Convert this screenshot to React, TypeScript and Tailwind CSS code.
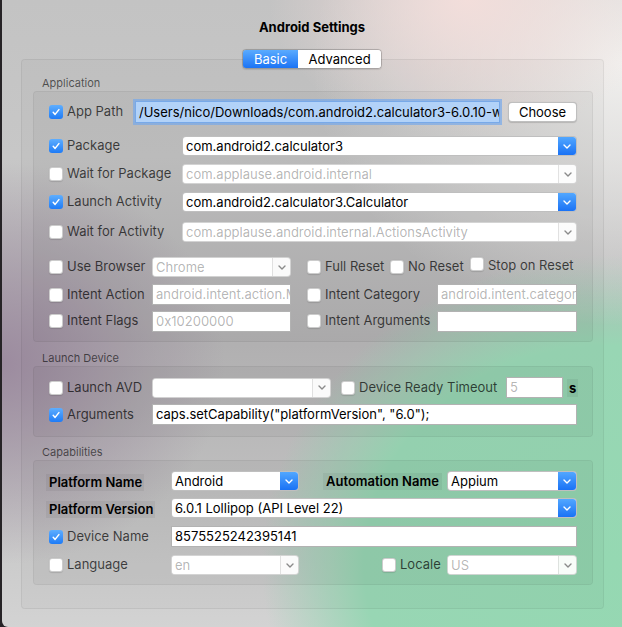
import React from "react"

// small chevron used by every popup button
function Chevron({ light }: { light?: boolean }) {
  return (
    <svg width="8" height="5" viewBox="0 0 8 5">
      <polyline
        points="1,1 4,4 7,1"
        fill="none"
        stroke={light ? "#ffffff" : "#8a8a8a"}
        strokeWidth="1.4"
        strokeLinecap="round"
        strokeLinejoin="round"
      />
    </svg>
  )
}

function Check({ on, className = "" }: { on?: boolean; className?: string }) {
  if (on) {
    return (
      <span
        className={`flex h-[14px] w-[14px] shrink-0 items-center justify-center rounded-[3px] bg-[linear-gradient(#5eaeff,#1e7bf6)] ${className}`}
      >
        <svg width="10" height="10" viewBox="0 0 10 10">
          <path
            d="M2.2 5.3 4.1 7.4 7.9 2.6"
            fill="none"
            stroke="#fff"
            strokeWidth="1.5"
            strokeLinecap="round"
            strokeLinejoin="round"
          />
        </svg>
      </span>
    )
  }
  return (
    <span
      className={`h-[14px] w-[14px] shrink-0 rounded-[3px] border border-black/20 bg-white shadow-[0_0.5px_1px_rgba(0,0,0,0.12)] ${className}`}
    />
  )
}

function Label({ children, w }: { children: React.ReactNode; w: string }) {
  return <span className={`ml-[4px] shrink-0 whitespace-nowrap text-[13px] text-black/70 ${w}`}>{children}</span>
}

function PopUp({ value, w }: { value: string; w: string }) {
  return (
    <div className={`flex h-[20px] shrink-0 overflow-hidden rounded-[4px] border border-black/25 bg-white ${w}`}>
      <div className="flex-1 overflow-hidden whitespace-nowrap pl-[3px] text-[13px] leading-[18px] text-black">{value}</div>
      <div className="flex w-[18px] items-center justify-center bg-[linear-gradient(#52a7ff,#1a72f5)]">
        <Chevron light />
      </div>
    </div>
  )
}

function OffPopUp({ value, w }: { value: string; w: string }) {
  return (
    <div className={`flex h-[20px] shrink-0 overflow-hidden rounded-[4px] border border-black/15 bg-white/90 ${w}`}>
      <div className="flex-1 overflow-hidden whitespace-nowrap bg-white pl-[3px] text-[13px] leading-[18px] text-black/30">
        {value}
      </div>
      <div className="flex w-[18px] items-center justify-center border-l border-black/10 bg-white/40">
        <Chevron />
      </div>
    </div>
  )
}

function Field({ value, w, dim }: { value: string; w: string; dim?: boolean }) {
  return (
    <div
      className={`h-[21px] shrink-0 overflow-hidden whitespace-nowrap border border-black/30 bg-white pl-[3px] text-[13px] leading-[19px] ${
        dim ? "text-black/30" : "text-black"
      } ${w}`}
    >
      {value}
    </div>
  )
}

function Heading({ children, top }: { children: React.ReactNode; top: string }) {
  return <div className={`ml-[20px] h-[16px] text-[11px] leading-[16px] text-black/60 ${top}`}>{children}</div>
}

function BoldLabel({ children, w }: { children: React.ReactNode; w: string }) {
  return (
    <span className={`h-[17px] shrink-0 whitespace-nowrap bg-black/[0.05] pl-[3px] text-[13px] font-semibold leading-[17px] text-black ${w}`}>
      {children}
    </span>
  )
}

export default function App() {
  return (
    <div className="flex h-[627px] w-[622px] overflow-hidden bg-[#262326] font-['Inter','Liberation_Sans',sans-serif]">
      <div className="ml-[2px] h-[627px] w-[620px] rounded-bl-[6px] bg-[image:radial-gradient(ellipse_32%_22%_at_75%_0%,rgba(244,222,219,0.95),rgba(244,222,219,0)),radial-gradient(ellipse_50%_42%_at_100%_10%,rgba(243,242,240,0.95),rgba(243,242,240,0)),radial-gradient(ellipse_66%_58%_at_98%_90%,#95d8b2_0%,#98d6b4_60%,rgba(152,214,180,0)_85%),radial-gradient(ellipse_36%_32%_at_0%_58%,#9c8b9f,rgba(156,139,159,0)),linear-gradient(to_bottom,#c3c3c3_0%,#c7c7c7_25%,#b6b5b6_55%,#c5c5c5_80%,#d3d3d3_100%)]">
        <div className="pt-[19px] text-center text-[13px] font-bold leading-[16px] text-black">Android Settings</div>

        <div className="relative z-10 mt-[14px] flex justify-center">
          <div className="flex h-[20px] overflow-hidden rounded-[4px] border border-black/20 text-[13px] leading-[18px] shadow-[0_0.5px_1px_rgba(0,0,0,0.1)]">
            <span className="w-[55px] bg-[linear-gradient(#5aabff,#1c74f5)] text-center text-white">Basic</span>
            <span className="w-[83px] bg-white text-center text-black">Advanced</span>
          </div>
        </div>

        <div className="ml-[19px] -mt-[10px] w-[583px] rounded-[4px] border border-black/[0.06] bg-black/[0.025] pb-[23px] pt-[15px]">
          <Heading top="">Application</Heading>
          <div className="ml-[11px] w-[560px] rounded-[4px] border border-black/[0.05] bg-black/[0.035] pb-[10px] pl-[15px] pt-[9px]">
            <div className="flex h-[22px] items-center">
              <Check on />
              <Label w="w-[68px]">App Path</Label>
              <div className="h-[22px] w-[365px] shrink-0 overflow-hidden whitespace-nowrap border border-[#78a9e8] bg-[#b2d2f8] pl-[3px] text-[13px] leading-[20px] text-black shadow-[0_0_0_2px_rgba(120,170,235,0.7)]">
                /Users/nico/Downloads/com.android2.calculator3-6.0.10-w
              </div>
              <div className="ml-[8px] h-[20px] w-[69px] rounded-[4px] border border-black/25 bg-white text-center text-[13px] leading-[18px] text-black shadow-[0_0.5px_1px_rgba(0,0,0,0.15)]">
                Choose
              </div>
            </div>

            <div className="mt-[13px] flex h-[20px] items-center">
              <Check on />
              <Label w="w-[115px]">Package</Label>
              <PopUp value="com.android2.calculator3" w="w-[395px]" />
            </div>
            <div className="mt-[8px] flex h-[20px] items-center">
              <Check />
              <Label w="w-[115px]">Wait for Package</Label>
              <OffPopUp value="com.applause.android.internal" w="w-[395px]" />
            </div>
            <div className="mt-[8px] flex h-[20px] items-center">
              <Check on />
              <Label w="w-[115px]">Launch Activity</Label>
              <PopUp value="com.android2.calculator3.Calculator" w="w-[395px]" />
            </div>
            <div className="mt-[10px] flex h-[20px] items-center">
              <Check />
              <Label w="w-[115px]">Wait for Activity</Label>
              <OffPopUp value="com.applause.android.internal.ActionsActivity" w="w-[395px]" />
            </div>

            <div className="mt-[15px] flex h-[20px] items-center">
              <Check />
              <Label w="w-[85px]">Use Browser</Label>
              <OffPopUp value="Chrome" w="w-[139px]" />
              <Check className="ml-[16px]" />
              <Label w="w-[65px]">Full Reset</Label>
              <Check />
              <Label w="w-[62px]">No Reset</Label>
              <Check className="-mt-[6px]" />
              <span className="-mt-[2px] ml-[4px] whitespace-nowrap text-[13px] text-black/70">Stop on Reset</span>
            </div>
            <div className="mt-[7px] flex h-[21px] items-center">
              <Check />
              <Label w="w-[85px]">Intent Action</Label>
              <Field value="android.intent.action.M" w="w-[139px]" dim />
              <Check className="ml-[16px]" />
              <Label w="w-[112px]">Intent Category</Label>
              <Field value="android.intent.categor" w="w-[140px]" dim />
            </div>
            <div className="mt-[6px] flex h-[20px] items-center">
              <Check />
              <Label w="w-[85px]">Intent Flags</Label>
              <Field value="0x10200000" w="w-[139px]" dim />
              <Check className="ml-[16px]" />
              <Label w="w-[112px]">Intent Arguments</Label>
              <Field value="" w="w-[140px]" />
            </div>
          </div>

          <Heading top="mt-[8px]">Launch Device</Heading>
          <div className="ml-[11px] w-[560px] rounded-[4px] border border-black/[0.05] bg-black/[0.035] pb-[11px] pl-[15px] pt-[10px]">
            <div className="flex h-[21px] items-center">
              <Check />
              <Label w="w-[85px]">Launch AVD</Label>
              <OffPopUp value="" w="w-[179px]" />
              <Check className="ml-[10px]" />
              <Label w="w-[147px]">Device Ready Timeout</Label>
              <Field value="5" w="w-[57px]" dim />
              <span className="ml-[4px] h-[18px] bg-black/[0.05] px-[2px] text-[13px] font-bold leading-[18px] text-black">s</span>
            </div>
            <div className="mt-[6px] flex h-[21px] items-center">
              <Check on />
              <Label w="w-[85px]">Arguments</Label>
              <Field value={'caps.setCapability("platformVersion", "6.0");'} w="w-[425px]" />
            </div>
          </div>

          <Heading top="mt-[7px]">Capabilities</Heading>
          <div className="ml-[11px] w-[560px] rounded-[4px] border border-black/[0.05] bg-black/[0.035] pb-[9px] pl-[12px] pt-[10px]">
            <div className="flex h-[20px] items-center">
              <span className="w-[125px] shrink-0">
                <BoldLabel w="inline-block w-[98px]">Platform Name</BoldLabel>
              </span>
              <PopUp value="Android" w="w-[128px]" />
              <BoldLabel w="ml-[24px] w-[119px]">Automation Name</BoldLabel>
              <span className="w-[5px] shrink-0" />
              <PopUp value="Appium" w="w-[130px]" />
            </div>
            <div className="mt-[7px] flex h-[20px] items-center">
              <span className="w-[125px] shrink-0">
                <BoldLabel w="inline-block w-[109px]">Platform Version</BoldLabel>
              </span>
              <PopUp value="6.0.1 Lollipop (API Level 22)" w="w-[406px]" />
            </div>
            <div className="mt-[8px] flex h-[21px] items-center pl-[3px]">
              <Check on />
              <Label w="w-[104px]">Device Name</Label>
              <Field value="8575525242395141" w="w-[406px]" />
            </div>
            <div className="mt-[8px] flex h-[20px] items-center pl-[3px]">
              <Check />
              <Label w="w-[104px]">Language</Label>
              <OffPopUp value="en" w="w-[128px]" />
              <Check className="ml-[83px]" />
              <Label w="w-[47px]">Locale</Label>
              <OffPopUp value="US" w="w-[130px]" />
            </div>
          </div>
        </div>
      </div>
    </div>
  )
}
